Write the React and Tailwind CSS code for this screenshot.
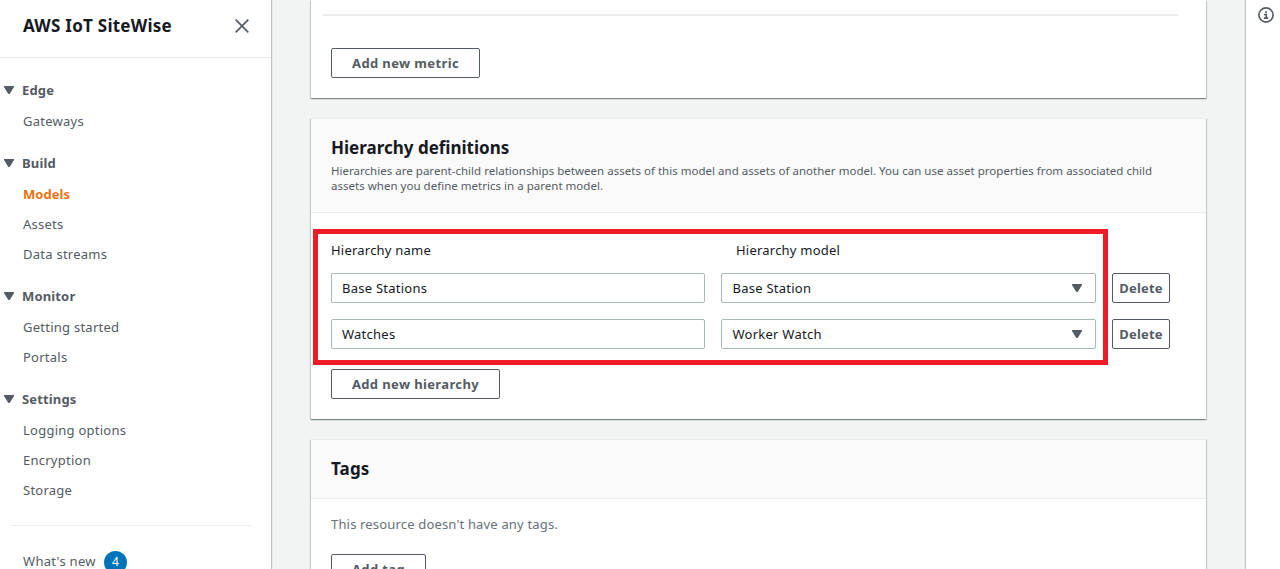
import React from "react";

const GROUPS = [
  { title: "Edge", items: ["Gateways"] },
  { title: "Build", items: ["Models", "Assets", "Data streams"] },
  { title: "Monitor", items: ["Getting started", "Portals"] },
  { title: "Settings", items: ["Logging options", "Encryption", "Storage"] },
];

const HIERARCHIES = [
  { name: "Base Stations", model: "Base Station" },
  { name: "Watches", model: "Worker Watch" },
];

function Caret() {
  return (
    <svg width="10" height="8" viewBox="0 0 10 8" className="block shrink-0">
      <path d="M0 0H10V1L6 7.4Q5 8.6 4 7.4L0 1Z" fill="#545b64" />
    </svg>
  );
}

function Button({ className, children }) {
  return (
    <button
      className={`flex h-[30px] shrink-0 items-center justify-center rounded-[2px] border border-[#545b64] bg-white pt-[2px] text-[13px] font-bold whitespace-nowrap text-[#545b64] ${className}`}
    >
      {children}
    </button>
  );
}

function Card({ className, children }) {
  return (
    <section
      className={`shrink-0 bg-white shadow-[0_1px_1px_0_rgba(0,28,36,0.3),1px_1px_1px_0_rgba(0,28,36,0.15),-1px_1px_1px_0_rgba(0,28,36,0.15)] ${className}`}
    >
      {children}
    </section>
  );
}

function Sidebar() {
  return (
    <nav className="z-10 flex w-[271px] shrink-0 flex-col bg-white shadow-[1px_0_1px_0_rgba(0,28,36,0.22)]">
      <div className="flex h-[58px] shrink-0 items-center justify-between border-b border-[#eaeded] pr-[22px] pb-[5px] pl-[23px]">
        <h2 className="text-[17px] font-bold tracking-[0.25px] text-[#16191f]">AWS IoT SiteWise</h2>
        <svg width="14" height="14" viewBox="0 0 14 14" fill="none" stroke="#545b64" strokeWidth="1.7">
          <path d="M0.7 0.7L13.3 13.3M13.3 0.7L0.7 13.3" />
        </svg>
      </div>
      <div className="flex flex-col gap-4 pt-[21px]">
        {GROUPS.map((g) => (
          <div key={g.title}>
            <div className="mb-[5px] flex h-[22px] items-center gap-2 pl-1 text-[13px] font-bold tracking-[0.15px] text-[#545b64]">
              <Caret />
              <span className="pt-[2px]">{g.title}</span>
            </div>
            {g.items.map((t) => (
              <div
                key={t}
                className={`flex h-[30px] items-center pt-[2px] pl-[23px] text-[13px] ${t === "Models" ? "font-bold tracking-[0.05px] text-[#ec7211]" : "tracking-[0.25px] text-[#545b64]"}`}
              >
                {t}
              </div>
            ))}
          </div>
        ))}
      </div>
      <hr className="mt-5 mr-5 ml-[11px] border-[#eaeded]" />
      <div className="mt-[21px] flex h-[30px] shrink-0 items-center gap-2 pl-[23px] text-[13px] text-[#545b64]">
        <span className="tracking-[0.3px]">What's new</span>
        <span className="flex h-[23px] w-[23px] items-center justify-center rounded-full bg-[#0073bb] text-[12px] text-white">
          4
        </span>
      </div>
    </nav>
  );
}

export default function App() {
  return (
    <div className="flex h-[569px] w-[1280px] overflow-hidden bg-[#f2f3f3] font-['Noto_Sans',sans-serif] text-[#16191f]">
      <Sidebar />
      <main className="flex w-[975px] shrink-0 flex-col gap-5 pr-[40px] pl-[40px]">
        <Card className="h-[98px] pt-[14px]">
          <hr className="mr-[28px] ml-[12px] border-t-2 border-[#eaeded]" />
          <Button className="mt-8 ml-5 w-[149px] tracking-[0.37px]">Add new metric</Button>
        </Card>
        <Card className="relative h-[301px]">
          <header className="h-[95px] border-y border-[#eaeded] bg-[#fafafa] px-5 pt-[18px]">
            <h3 className="text-[17px] leading-[22px] font-bold">Hierarchy definitions</h3>
            <p className="mt-1 text-[11.5px] leading-[15px] tracking-[0.02px] whitespace-nowrap text-[#545b64]">
              Hierarchies are parent-child relationships between assets of this model and assets of another model. You
              can use asset properties from associated child
              <br />
              assets when you define metrics in a parent model.
            </p>
          </header>
          <div className="px-5 pt-[26px]">
            <div className="flex h-[22px] items-center pt-[2px] text-[13px] tracking-[0.22px]">
              <span className="w-[405px]">Hierarchy name</span>
              <span>Hierarchy model</span>
            </div>
            <div className="mt-3 flex flex-col gap-4">
              {HIERARCHIES.map((h) => (
                <div key={h.name} className="flex h-[30px] gap-4 text-[13px] tracking-[0.25px]">
                  <div className="flex w-[374px] items-center rounded-[2px] border border-[#aab7b8] pt-[2px] pl-[10px]">
                    {h.name}
                  </div>
                  <div className="flex w-[375px] items-center justify-between rounded-[2px] border border-[#aab7b8] pr-[13px] pl-[10.5px]">
                    <span className="pt-[2px]">{h.model}</span>
                    <Caret />
                  </div>
                  <Button className="w-[58px] tracking-[0.2px]">Delete</Button>
                </div>
              ))}
            </div>
            <Button className="mt-5 w-[169px] tracking-[0.37px]">Add new hierarchy</Button>
          </div>
          <div className="pointer-events-none absolute top-[111px] left-[2px] h-[136px] w-[795px] border-[5px] border-[#ee1c24]" />
        </Card>
        <Card className="h-[200px]">
          <header className="flex h-[60px] items-center border-y border-[#eaeded] bg-[#fafafa] px-5">
            <h3 className="text-[17px] leading-[22px] font-bold tracking-[0.15px]">Tags</h3>
          </header>
          <div className="px-5 pt-[14px]">
            <p className="text-[13px] leading-[22px] tracking-[0.17px] text-[#687078]">
              This resource doesn't have any tags.
            </p>
            <Button className="mt-[19px] w-[95px] tracking-[0.37px]">Add tag</Button>
          </div>
        </Card>
      </main>
      <aside className="flex w-[34px] shrink-0 bg-white pt-[7px] pl-[12px] shadow-[-1px_0_1px_0_rgba(0,28,36,0.22)]">
        <svg width="16" height="16" viewBox="0 0 16 16" className="shrink-0" fill="none" stroke="#545b64">
          <circle cx="8" cy="8" r="7.1" strokeWidth="1.7" />
          <path d="M7 5H9M6 7.5H8.2V11M6 11.2H10.2" strokeWidth="1.7" />
        </svg>
      </aside>
    </div>
  );
}
